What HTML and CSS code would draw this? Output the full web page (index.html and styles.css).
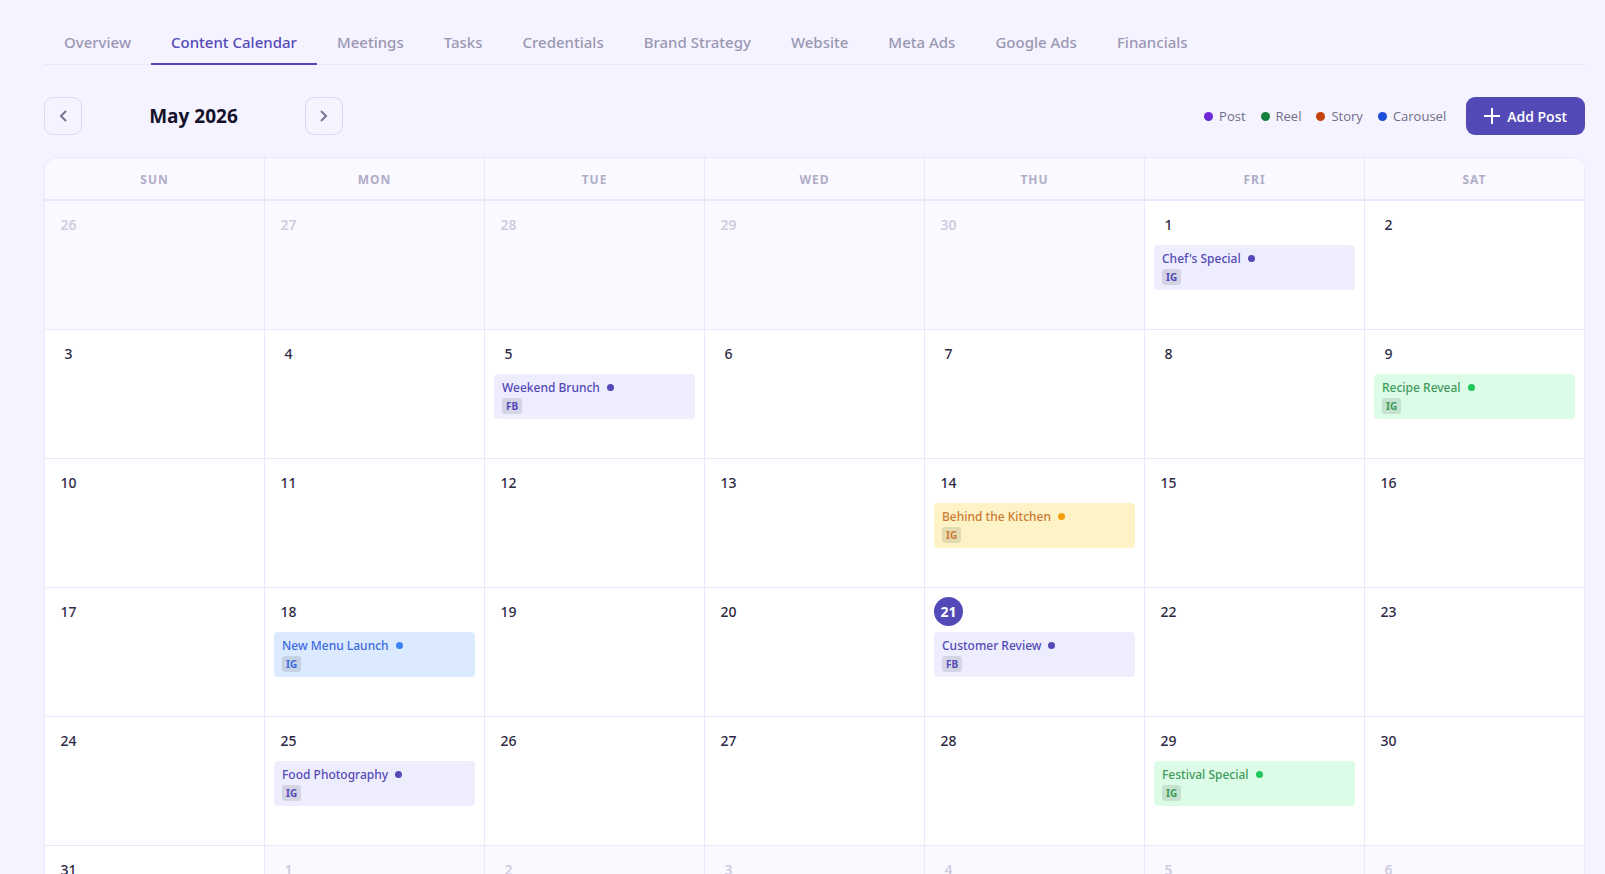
FILE: index.html
```html
<!DOCTYPE html>
<html lang="en">
<head>
  <meta charset="UTF-8">
  <meta name="viewport" content="width=device-width, initial-scale=1">
  <title>Content Calendar</title>
  <link rel="stylesheet" href="styles.css">
</head>
<body>
  <nav class="tabs">
    <a class="tab" href="#overview">Overview</a>
    <a class="tab active" href="#calendar">Content Calendar</a>
    <a class="tab" href="#meetings">Meetings</a>
    <a class="tab" href="#tasks">Tasks</a>
    <a class="tab" href="#credentials">Credentials</a>
    <a class="tab" href="#brand">Brand Strategy</a>
    <a class="tab" href="#website">Website</a>
    <a class="tab" href="#meta-ads">Meta Ads</a>
    <a class="tab" href="#google-ads">Google Ads</a>
    <a class="tab" href="#financials">Financials</a>
  </nav>

  <div class="toolbar">
    <div class="month-nav">
      <button class="nav-btn" type="button" aria-label="Previous month">
        <svg width="16" height="16" viewBox="0 0 16 16"><path d="M11 3L6 8l5 5"/></svg>
      </button>
      <h1 class="month">May 2026</h1>
      <button class="nav-btn" type="button" aria-label="Next month">
        <svg width="16" height="16" viewBox="0 0 16 16"><path d="M5 3l5 5-5 5"/></svg>
      </button>
    </div>
    <div class="actions">
      <ul class="legend">
        <li><span class="dot post"></span>Post</li>
        <li><span class="dot reel"></span>Reel</li>
        <li><span class="dot story"></span>Story</li>
        <li><span class="dot carousel"></span>Carousel</li>
      </ul>
      <button class="add-btn" type="button">
        <svg width="16" height="16" viewBox="0 0 16 16"><path d="M8 0v16M0 8h16"/></svg>
        Add Post
      </button>
    </div>
  </div>

  <div class="calendar">
    <table>
      <thead>
        <tr><th>SUN</th><th>MON</th><th>TUE</th><th>WED</th><th>THU</th><th>FRI</th><th>SAT</th></tr>
      </thead>
      <tbody>
        <tr>
          <td class="other"><span class="day">26</span></td>
          <td class="other"><span class="day">27</span></td>
          <td class="other"><span class="day">28</span></td>
          <td class="other"><span class="day">29</span></td>
          <td class="other"><span class="day">30</span></td>
          <td>
            <span class="day">1</span>
            <div class="event purple"><div class="title">Chef's Special<i></i></div><span class="tag">IG</span></div>
          </td>
          <td><span class="day">2</span></td>
        </tr>
        <tr>
          <td><span class="day">3</span></td>
          <td><span class="day">4</span></td>
          <td>
            <span class="day">5</span>
            <div class="event purple"><div class="title">Weekend Brunch<i></i></div><span class="tag">FB</span></div>
          </td>
          <td><span class="day">6</span></td>
          <td><span class="day">7</span></td>
          <td><span class="day">8</span></td>
          <td>
            <span class="day">9</span>
            <div class="event green"><div class="title">Recipe Reveal<i></i></div><span class="tag">IG</span></div>
          </td>
        </tr>
        <tr>
          <td><span class="day">10</span></td>
          <td><span class="day">11</span></td>
          <td><span class="day">12</span></td>
          <td><span class="day">13</span></td>
          <td>
            <span class="day">14</span>
            <div class="event yellow"><div class="title">Behind the Kitchen<i></i></div><span class="tag">IG</span></div>
          </td>
          <td><span class="day">15</span></td>
          <td><span class="day">16</span></td>
        </tr>
        <tr>
          <td><span class="day">17</span></td>
          <td>
            <span class="day">18</span>
            <div class="event blue"><div class="title">New Menu Launch<i></i></div><span class="tag">IG</span></div>
          </td>
          <td><span class="day">19</span></td>
          <td><span class="day">20</span></td>
          <td>
            <span class="day today">21</span>
            <div class="event purple"><div class="title">Customer Review<i></i></div><span class="tag">FB</span></div>
          </td>
          <td><span class="day">22</span></td>
          <td><span class="day">23</span></td>
        </tr>
        <tr>
          <td><span class="day">24</span></td>
          <td>
            <span class="day">25</span>
            <div class="event purple"><div class="title">Food Photography<i></i></div><span class="tag">IG</span></div>
          </td>
          <td><span class="day">26</span></td>
          <td><span class="day">27</span></td>
          <td><span class="day">28</span></td>
          <td>
            <span class="day">29</span>
            <div class="event green"><div class="title">Festival Special<i></i></div><span class="tag">IG</span></div>
          </td>
          <td><span class="day">30</span></td>
        </tr>
        <tr>
          <td><span class="day">31</span></td>
          <td class="other"><span class="day">1</span></td>
          <td class="other"><span class="day">2</span></td>
          <td class="other"><span class="day">3</span></td>
          <td class="other"><span class="day">4</span></td>
          <td class="other"><span class="day">5</span></td>
          <td class="other"><span class="day">6</span></td>
        </tr>
      </tbody>
    </table>
  </div>
</body>
</html>
```

FILE: styles.css
```css
* {
  box-sizing: border-box;
}
body {
  margin: 0;
  padding: 20px 20px 20px 44px;
  background: #f5f3ff;
  color: #2d2a45;
  font-family: "Noto Sans", "Open Sans", sans-serif;
  font-size: 15px;
}

/* tabs */
.tabs {
  display: flex;
  height: 45px;
  border-bottom: 1px solid #e9e7f8;
}
.tab {
  height: 45px;
  padding: 0 20px;
  border-bottom: 2px solid transparent;
  color: #9a97b3;
  font-weight: 500;
  line-height: 44px;
  text-decoration: none;
  white-space: nowrap;
}
.tab.active {
  border-bottom-color: #534ab7;
  color: #534ab7;
}

/* month switcher, legend and add button */
.toolbar {
  display: flex;
  justify-content: space-between;
  align-items: center;
  margin: 32px 0 22px;
  font-family: "Open Sans", "Noto Sans", sans-serif;
}
.month-nav, .actions, .legend, .legend li {
  display: flex;
  align-items: center;
}
.nav-btn {
  display: flex;
  align-items: center;
  justify-content: center;
  width: 38px;
  height: 38px;
  padding: 0;
  border: 1px solid #dcd8f5;
  border-radius: 9px;
  background: transparent;
}
.nav-btn svg {
  fill: none;
  stroke: #77748f;
  stroke-width: 2;
}
.month {
  width: 223px;
  margin: 0;
  color: #14122b;
  font-size: 19px;
  font-weight: 700;
  line-height: 26px;
  text-align: center;
}
.actions {
  gap: 20px;
}
.legend {
  gap: 15px;
  margin: 0;
  padding: 0;
  list-style: none;
  color: #716e88;
  font-size: 13px;
  font-weight: 500;
}
.legend li {
  gap: 6px;
}
.dot {
  width: 9px;
  height: 9px;
  border-radius: 50%;
}
.post { background: #6d28d9; }
.reel { background: #15803d; }
.story { background: #c2410c; }
.carousel { background: #1d4ed8; }
.add-btn {
  display: flex;
  align-items: center;
  gap: 7px;
  height: 38px;
  padding: 0 18px;
  border: 0;
  border-radius: 9px;
  background: #534ab7;
  color: #fff;
  font-family: inherit;
  font-size: 14px;
  font-weight: 600;
}
.add-btn svg {
  stroke: #fff;
  stroke-width: 2;
}

/* calendar */
.calendar {
  overflow: hidden;
  border: 1px solid #e9e7fb;
  border-right: 0; /* last column draws it */
  border-radius: 14px;
  background: #fff;
}
table {
  width: 100%;
  border-collapse: separate;
  border-spacing: 0;
  table-layout: fixed;
}
th {
  height: 43px;
  padding: 2px 0 0;
  border-right: 1px solid #e9e7fb;
  border-bottom: 2px solid #e9e7fb;
  background: #faf9ff;
  color: #b0adc8;
  font-size: 12px;
  font-weight: 700;
  letter-spacing: 1px;
}
td {
  height: 129px;
  padding: 9px;
  border-right: 1px solid #e9e7fb;
  border-bottom: 1px solid #e9e7fb;
  vertical-align: top;
}
.other {
  background: #faf9ff;
}
.day {
  display: block;
  width: 29px;
  height: 29px;
  border-radius: 50%;
  font-size: 14px;
  font-weight: 500;
  line-height: 29px;
  text-align: center;
}
.other .day {
  color: #cfccdf;
  font-weight: 600;
}
.today {
  background: #534ab7;
  color: #fff;
  font-weight: 700;
}
.event {
  height: 45px;
  margin-top: 6px;
  padding: 4px 8px;
  border-radius: 4px;
}
.title {
  display: flex;
  align-items: center;
  gap: 7px;
  height: 20px;
  padding-bottom: 2px;
  font-size: 12px;
  font-weight: 500;
  white-space: nowrap;
}
.title i {
  width: 7px;
  height: 7px;
  border-radius: 50%;
}
.tag {
  display: block;
  width: fit-content;
  padding: 0 4px;
  border-radius: 3px;
  background: rgba(0, 0, 0, 0.1);
  font-size: 10px;
  font-weight: 700;
  line-height: 16px;
}
.purple { background: #eeedfe; color: #534ab7; }
.purple i { background: #534ab7; }
.green { background: #dcfce7; color: #3f9a5c; }
.green i { background: #22c55e; }
.yellow { background: #fef3c7; color: #cc7a33; }
.yellow i { background: #f59e0b; }
.blue { background: #dbeafe; color: #4169e1; }
.blue i { background: #3b82f6; }
```
